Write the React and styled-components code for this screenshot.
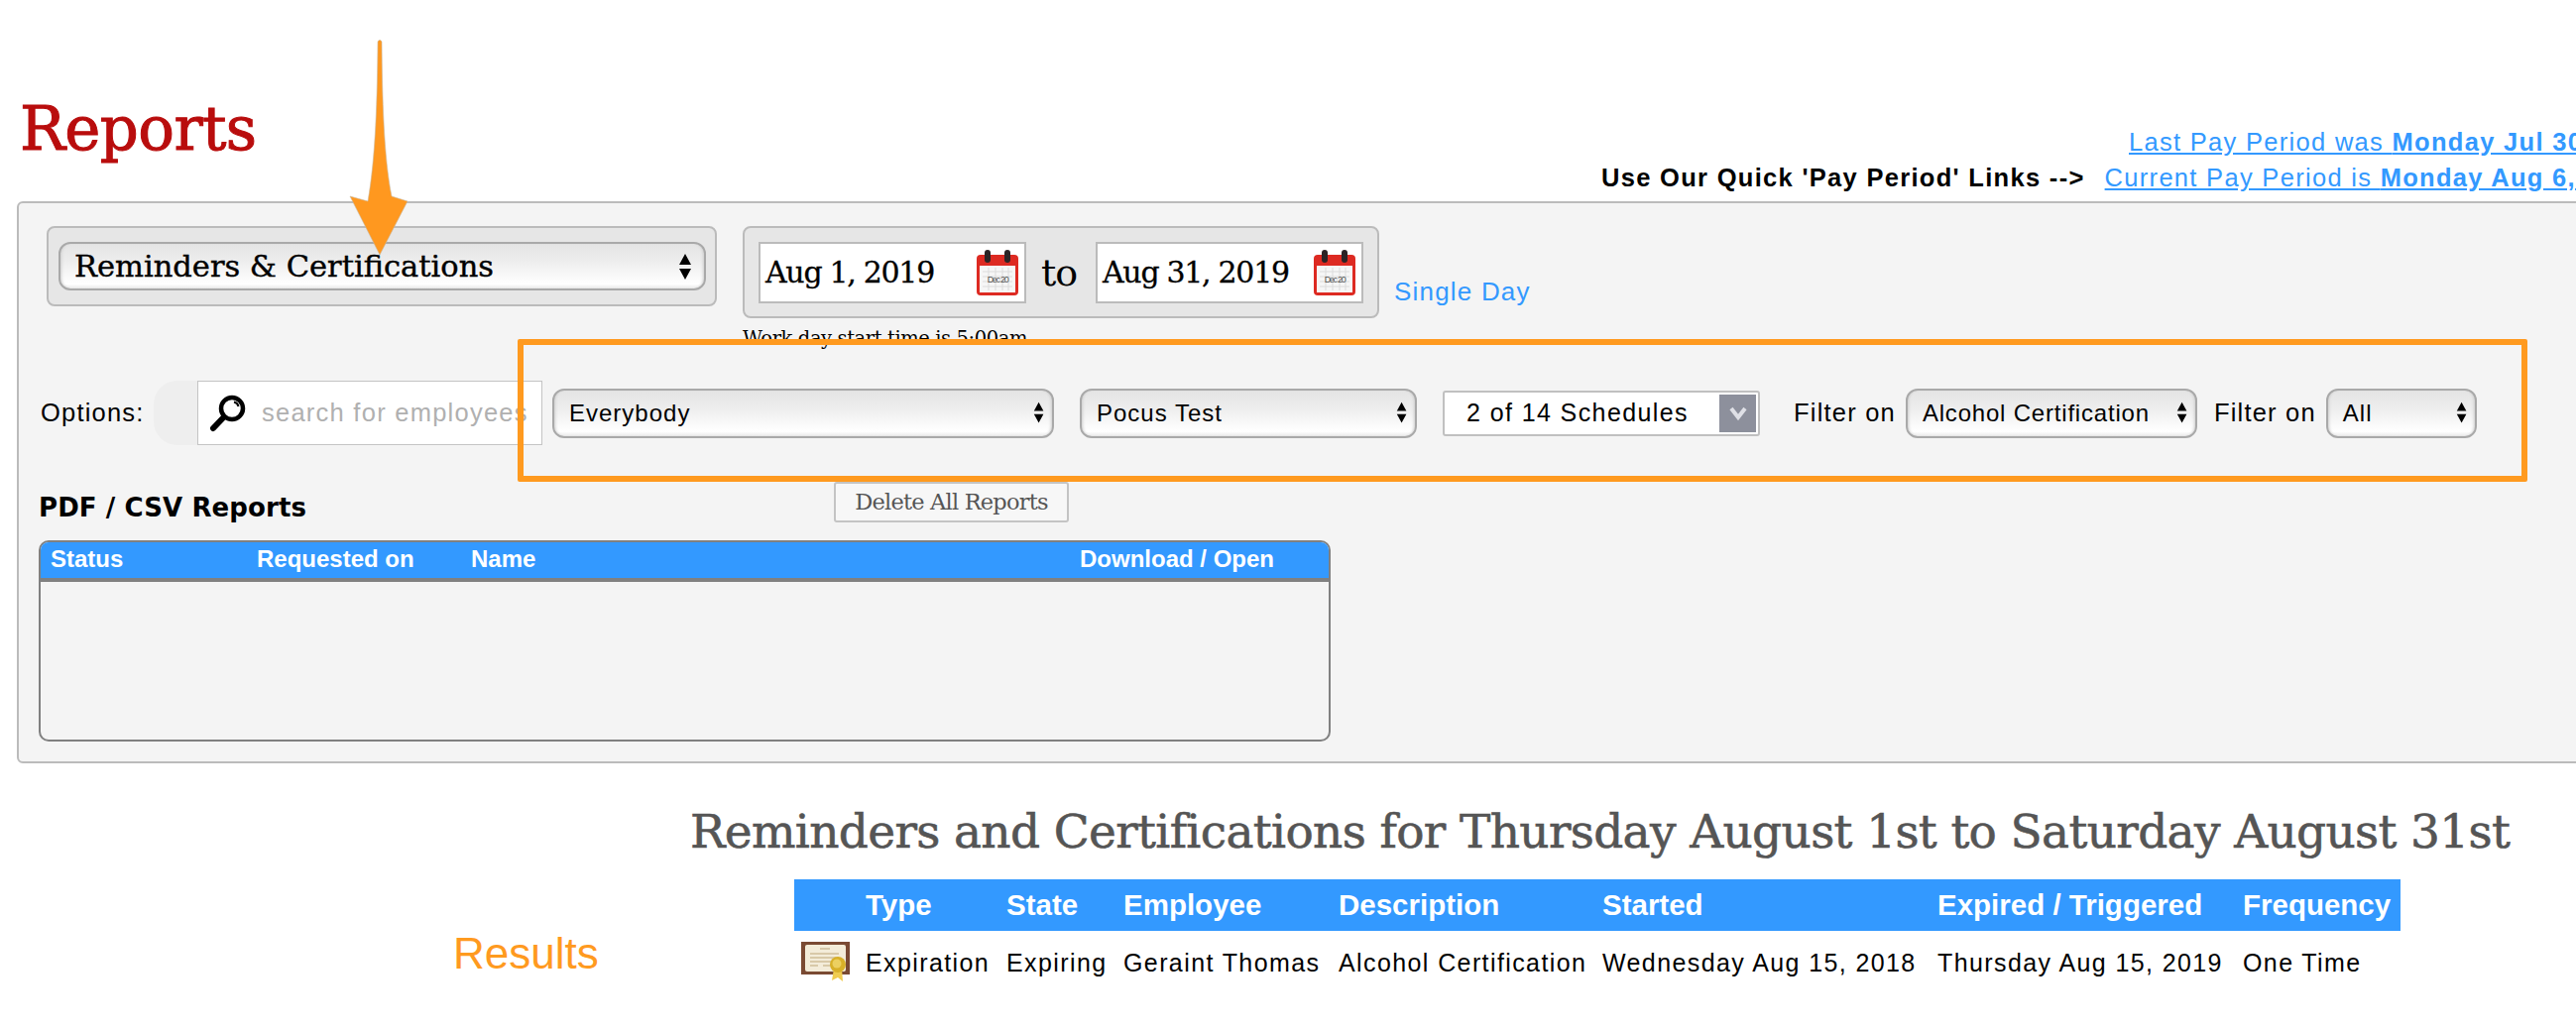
import React from "react";
import styled, { createGlobalStyle } from "styled-components";

const SANS = '"Liberation Sans", Arial, sans-serif';
const SLAB = '"DejaVu Serif", "Liberation Serif", serif';

const Global = createGlobalStyle`
  html, body { margin: 0; padding: 0; background: #fff; }
  body { font-family: ${SANS}; color: #000; overflow: hidden; }
`;

const Page = styled.div`
  position: relative;
  width: 2598px;
  height: 1040px;
  overflow: hidden;
  background: #fff;
`;

const Header = styled.header`
  display: flex;
  height: 203px;
  box-sizing: border-box;
  padding-left: 20px;
`;

const Title = styled.h1`
  margin: 94px 0 0;
  width: 1595px;
  flex: none;
  font: 400 61px/72px ${SLAB};
  letter-spacing: -0.6px;
  color: #b90d0d;
  -webkit-text-stroke: 1px #b90d0d;
`;

const PayLinks = styled.div`
  flex: none;
  padding-top: 125px;
  width: 1100px;
  font-size: 25.5px;
  line-height: 36px;
  letter-spacing: 1.3px;
  white-space: nowrap;
`;

const PayRow = styled.div`
  padding-left: ${(p) => p.$indent}px;
`;

const QuickLabel = styled.strong`
  margin-right: 20px;
`;

const PayLink = styled.a`
  color: #3399ff;
  text-decoration: underline;
  b { font-weight: 700; }
`;

const Panel = styled.section`
  margin-left: 17px;
  width: 2700px;
  height: 567px;
  box-sizing: border-box;
  background: #f4f4f4;
  border: 2px solid #bbb;
  border-radius: 6px;
  padding: 23px 0 0 20px;
`;

const TopRow = styled.div`
  display: flex;
  align-items: flex-start;
`;

const Group = styled.div`
  box-sizing: border-box;
  background: #e6e6e6;
  border: 2px solid #bbb;
  border-radius: 8px;
`;

const ReportGroup = styled(Group)`
  width: 676px;
  height: 81px;
  padding: 14px 10px;
  margin-left: 8px;
`;

const DateColumn = styled.div`
  margin-left: 26px;
  width: 642px;
`;

const DateGroup = styled(Group)`
  display: flex;
  align-items: center;
  height: 93px;
  padding: 14px;
`;

const DateField = styled.div`
  display: flex;
  align-items: center;
  justify-content: space-between;
  width: 270px;
  height: 62px;
  box-sizing: border-box;
  padding: 0 4px 0 5px;
  background: #fff;
  border: 2px solid #bbb;
  font: 400 30px/1 ${SLAB};
  letter-spacing: -1.3px;
  -webkit-text-stroke: 0.3px #000;
`;

const ToLabel = styled.span`
  width: 70px;
  padding-right: 4px;
  box-sizing: border-box;
  text-align: center;
  font: 400 38px/1 ${SLAB};
  letter-spacing: -1px;
`;

const WorkNote = styled.div`
  margin-top: 9px;
  font: 400 19.5px/24px ${SLAB};
  letter-spacing: -0.4px;
  white-space: nowrap;
`;

const SingleDay = styled.a`
  margin: 50px 0 0 15px;
  color: #3399ff;
  font: 400 26px/32px ${SANS};
  letter-spacing: 1.2px;
`;

const SelectBox = styled.div`
  display: flex;
  align-items: center;
  justify-content: space-between;
  flex: none;
  box-sizing: border-box;
  width: ${(p) => p.$w}px;
  height: ${(p) => p.$h || 50}px;
  margin-left: ${(p) => p.$ml || 0}px;
  padding: 0 ${(p) => p.$pr || 8}px 0 ${(p) => p.$pl || 15}px;
  background: linear-gradient(#e4e4e4 0%, #ececec 35%, #fbfbfb 78%, #fff 90%, #e9e9e9 100%);
  border: 2px solid #a9a9a9;
  border-radius: 12px;
  box-shadow: inset 3px 0 3px -2px #ccc, inset -3px 0 3px -2px #ccc;
  font-family: ${(p) => (p.$slab ? SLAB : SANS)};
  font-size: ${(p) => p.$fs || 24}px;
  letter-spacing: ${(p) => p.$ls ?? 1}px;
  -webkit-text-stroke: ${(p) => (p.$slab ? "0.4px #000" : "0")};
  color: #000;
  white-space: nowrap;
`;

const OptionsRow = styled.div`
  display: flex;
  align-items: center;
  height: 65px;
  margin-top: 30px;
`;

const OptionsLabel = styled.span`
  width: 116px;
  flex: none;
  padding-left: 2px;
  box-sizing: border-box;
  font-size: 25.5px;
  letter-spacing: 1.2px;
  white-space: nowrap;
`;

const SearchWrap = styled.div`
  display: flex;
  flex: none;
  height: 65px;
  width: 392px;
  background: #eeeeee;
  border-radius: 24px 0 0 24px;
  padding-left: 44px;
  box-sizing: border-box;
`;

const SearchBox = styled.div`
  flex: 1;
  display: flex;
  align-items: center;
  gap: 15px;
  background: #fff;
  border: 1.5px solid #c4c4c4;
  padding-left: 11px;
  font-size: 25.5px;
  letter-spacing: 1.25px;
  color: #b0b0b0;
  white-space: nowrap;
  overflow: hidden;
`;

const FilterSelects = styled.div`
  display: flex;
  align-items: center;
  margin-left: 10px;
`;

const MultiSelect = styled.div`
  display: flex;
  align-items: center;
  justify-content: space-between;
  box-sizing: border-box;
  width: 320px;
  height: 46px;
  margin: 0 34px 0 26px;
  padding: 0 2px 0 22px;
  background: #fff;
  border: 2px solid #c0c0c0;
  border-radius: 3px;
  font-size: 25px;
  letter-spacing: 1.4px;
  white-space: nowrap;
`;

const ChevronTile = styled.span`
  display: flex;
  align-items: center;
  justify-content: center;
  width: 37px;
  height: 38px;
  background: #8d909c;
`;

const FilterLabel = styled.span`
  font-size: 25.5px;
  letter-spacing: 1.2px;
  white-space: nowrap;
  margin: 0 ${(p) => p.$gap}px 0 ${(p) => p.$ml || 0}px;
`;

const ReportsHead = styled.div`
  display: flex;
  align-items: flex-start;
  height: 59px;
  margin-top: 37px;
`;

const ReportsTitle = styled.h2`
  margin: 8px 0 0;
  width: 802px;
  flex: none;
  font: 700 26px/36px "DejaVu Sans", Verdana, sans-serif;
  letter-spacing: 0.1px;
  white-space: nowrap;
`;

const DeleteButton = styled.button`
  box-sizing: border-box;
  width: 237px;
  height: 41px;
  padding: 0;
  background: #f7f7f7;
  border: 2px solid #c4c4c4;
  border-radius: 3px;
  color: #555;
  font: 400 22.5px/1 ${SLAB};
  letter-spacing: -0.8px;
`;

const ReportsTable = styled.div`
  width: 1303px;
  height: 203px;
  box-sizing: border-box;
  border: 2px solid #808080;
  border-radius: 10px;
  overflow: hidden;
`;

const ReportsHeader = styled.div`
  display: grid;
  grid-template-columns: 208px 216px 614px 1fr;
  align-items: center;
  height: 40px;
  padding: 0 0 2px 10px;
  box-sizing: border-box;
  background: #3399ff;
  border-bottom: 4px solid #808080;
  color: #fff;
  font-weight: 700;
  font-size: 24px;
  white-space: nowrap;
`;

const ResultsArea = styled.main`
  margin-left: 696px;
  padding-top: 39px;
`;

const ResultsTitle = styled.h2`
  margin: 0;
  font: 400 47px/60px ${SLAB};
  letter-spacing: -0.65px;
  color: #555;
  -webkit-text-stroke: 0.6px #555;
  white-space: nowrap;
`;

const ResultTable = styled.div`
  margin: 18px 0 0 105px;
  width: 1620px;
`;

const grid = `
  display: grid;
  grid-template-columns: 72px 142px 118px 217px 266px 338px 308px 1fr;
  align-items: center;
  white-space: nowrap;
`;

const ResultHeader = styled.div`
  ${grid}
  height: 52px;
  background: #3399ff;
  color: #fff;
  font-size: 29.5px;
  font-weight: 700;
`;

const ResultRow = styled.div`
  ${grid}
  height: 64px;
  font-size: 25px;
  letter-spacing: 1.4px;
`;

const IconCell = styled.span`
  display: flex;
  padding-left: 7px;
`;

const Annotation = styled.div`
  position: absolute;
  pointer-events: none;
`;

const OrangeFrame = styled(Annotation)`
  left: 522px;
  top: 342px;
  width: 2027px;
  height: 144px;
  box-sizing: border-box;
  border: 6px solid #ff9a1f;
  border-radius: 2px;
`;

const ArrowOverlay = styled(Annotation)`
  left: 345px;
  top: 38px;
  line-height: 0;
`;

const ResultsNote = styled(Annotation)`
  left: 457px;
  top: 936px;
  color: #ff9a1f;
  font: 400 44px/52px ${SANS};
`;

const Updown = ({ size = 1 }) => (
  <svg width={14 * size} height={28 * size} viewBox="0 0 14 28" aria-hidden="true">
    <path d="M7 1 13 12H1ZM7 27 1 16H13Z" fill="#000" />
  </svg>
);

const Calendar = () => (
  <svg width="46" height="50" viewBox="0 0 46 50" aria-hidden="true">
    <rect x="2" y="7" width="42" height="41" rx="4" fill="#dd2a22" />
    <rect x="5" y="18" width="36" height="27" fill="#f6f6f6" />
    <path d="M8 24H38M8 29H38M8 34H38M8 39H38M14 20V43M21 20V43M28 20V43M34 20V43" stroke="#dcdcdc" strokeWidth="1" />
    <rect x="10" y="2" width="6" height="13" rx="3" fill="#2b2325" />
    <rect x="30" y="2" width="6" height="13" rx="3" fill="#2b2325" />
    <text x="23" y="35" textAnchor="middle" fontSize="9" fontFamily="Liberation Sans" fill="#555">Dec 20</text>
  </svg>
);

const Magnifier = () => (
  <svg width="38" height="40" viewBox="0 0 38 40" aria-hidden="true">
    <circle cx="23" cy="15" r="11" fill="#fff" stroke="#000" strokeWidth="4.500" />
    <path d="M25 8.500A6 6 0 0 1 29.500 13" fill="none" stroke="#000" strokeWidth="2" />
    <path d="M14.500 24 4 35" stroke="#000" strokeWidth="6" strokeLinecap="round" />
  </svg>
);

const Chevron = () => (
  <svg width="20" height="16" viewBox="0 0 20 16" aria-hidden="true">
    <path d="M3 3 10 12 17 3" fill="none" stroke="#dfe0e6" strokeWidth="4" />
  </svg>
);

const Certificate = () => (
  <svg width="50" height="44" viewBox="0 0 50 44" aria-hidden="true">
    <rect x="0" y="1" width="49" height="33" fill="#7a4a33" />
    <rect x="4" y="4" width="41" height="27" rx="2" fill="#f3ecd9" />
    <path d="M19 8H29" stroke="#cdbd9a" strokeWidth="1.500" />
    <path d="M9 13H38M9 17H38M9 21H30M9 25H17M22 25H33" stroke="#d8c9a8" strokeWidth="2" />
    <path d="M33 28 31 40 37 37 42 41 41 28Z" fill="#f0cc50" />
    <circle cx="37" cy="24" r="8" fill="#d8b028" />
    <circle cx="36" cy="23" r="4.500" fill="#ecd060" />
  </svg>
);

const DownArrow = () => (
  <svg width="76" height="222" viewBox="0 0 76 222" aria-hidden="true">
    <path
      d="M36 4C37 2 39 2 40 4C40.500 60 42 120 50 160L66 165 38 219 8 160 26 165C34 120 35.500 60 36 4Z"
      fill="#ff981f"
      stroke="#c9b9a0"
      strokeWidth="0.600"
    />
  </svg>
);

export default function App() {
  return (
    <Page>
      <Global />
      <Header>
        <Title>Reports</Title>
        <PayLinks>
          <PayRow $indent={532}>
            <PayLink>
              Last Pay Period was <b>Monday Jul 30</b>
            </PayLink>
          </PayRow>
          <PayRow $indent={0}>
            <QuickLabel>Use Our Quick 'Pay Period' Links --&gt;</QuickLabel>
            <PayLink>
              Current Pay Period is <b>Monday Aug 6,</b>
            </PayLink>
          </PayRow>
        </PayLinks>
      </Header>

      <Panel>
        <TopRow>
          <ReportGroup>
            <SelectBox $w={653} $h={49} $slab $fs={30.5} $ls={0} $pr={12} $pl={14}>
              Reminders &amp; Certifications <Updown />
            </SelectBox>
          </ReportGroup>
          <DateColumn>
            <DateGroup>
              <DateField>Aug 1, 2019 <Calendar /></DateField>
              <ToLabel>to</ToLabel>
              <DateField>Aug 31, 2019 <Calendar /></DateField>
            </DateGroup>
            <WorkNote>Work day start time is 5:00am</WorkNote>
          </DateColumn>
          <SingleDay>Single Day</SingleDay>
        </TopRow>

        <OptionsRow>
          <OptionsLabel>Options:</OptionsLabel>
          <SearchWrap>
            <SearchBox><Magnifier />search for employees</SearchBox>
          </SearchWrap>
          <FilterSelects>
            <SelectBox $w={506}>Everybody <Updown size={0.8} /></SelectBox>
            <SelectBox $w={340} $ml={26}>Pocus Test <Updown size={0.8} /></SelectBox>
            <MultiSelect>2 of 14 Schedules <ChevronTile><Chevron /></ChevronTile></MultiSelect>
            <FilterLabel $gap={10}>Filter on</FilterLabel>
            <SelectBox $w={294} $ls={0.8}>Alcohol Certification <Updown size={0.8} /></SelectBox>
            <FilterLabel $gap={10} $ml={17}>Filter on</FilterLabel>
            <SelectBox $w={152}>All <Updown size={0.8} /></SelectBox>
          </FilterSelects>
        </OptionsRow>

        <ReportsHead>
          <ReportsTitle>PDF / CSV Reports</ReportsTitle>
          <DeleteButton>Delete All Reports</DeleteButton>
        </ReportsHead>
        <ReportsTable>
          <ReportsHeader>
            <span>Status</span>
            <span>Requested on</span>
            <span>Name</span>
            <span>Download / Open</span>
          </ReportsHeader>
        </ReportsTable>
      </Panel>

      <ResultsArea>
        <ResultsTitle>Reminders and Certifications for Thursday August 1st to Saturday August 31st</ResultsTitle>
        <ResultTable>
          <ResultHeader>
            <span />
            <span>Type</span>
            <span>State</span>
            <span>Employee</span>
            <span>Description</span>
            <span>Started</span>
            <span>Expired / Triggered</span>
            <span>Frequency</span>
          </ResultHeader>
          <ResultRow>
            <IconCell><Certificate /></IconCell>
            <span>Expiration</span>
            <span>Expiring</span>
            <span>Geraint Thomas</span>
            <span>Alcohol Certification</span>
            <span>Wednesday Aug 15, 2018</span>
            <span>Thursday Aug 15, 2019</span>
            <span>One Time</span>
          </ResultRow>
        </ResultTable>
      </ResultsArea>

      <OrangeFrame />
      <ArrowOverlay><DownArrow /></ArrowOverlay>
      <ResultsNote>Results</ResultsNote>
    </Page>
  );
}
